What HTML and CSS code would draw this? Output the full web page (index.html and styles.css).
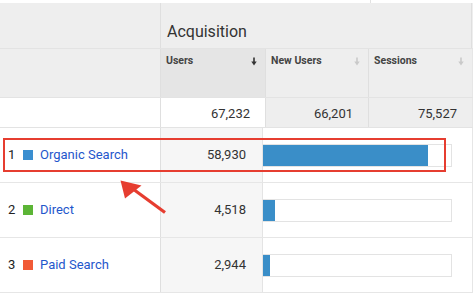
FILE: index.html
```html
<!DOCTYPE html>
<html>
<head>
<meta charset="utf-8">
<link rel="stylesheet" href="styles.css">
</head>
<body>
<div class="report">
  <div class="strip"><span class="tick"></span></div>
  <div class="grp">
    <div class="cell blank"></div>
    <div class="cell acq">Acquisition</div>
  </div>
  <div class="metrics">
    <div class="cell blank"></div>
    <div class="cell mh sorted"><span>Users</span>
      <svg class="sort" width="6" height="9" viewBox="0 0 6 9"><path d="M3 0.5V6" stroke="currentColor" stroke-width="1.6"/><path d="M0.3 4.6H5.7L3 8.4Z" fill="currentColor"/></svg>
    </div>
    <div class="cell mh"><span>New Users</span>
      <svg class="sort" width="6" height="9" viewBox="0 0 6 9"><path d="M3 0.5V6" stroke="currentColor" stroke-width="1.6"/><path d="M0.3 4.6H5.7L3 8.4Z" fill="currentColor"/></svg>
    </div>
    <div class="cell mh last"><span>Sessions</span>
      <svg class="sort" width="6" height="9" viewBox="0 0 6 9"><path d="M3 0.5V6" stroke="currentColor" stroke-width="1.6"/><path d="M0.3 4.6H5.7L3 8.4Z" fill="currentColor"/></svg>
    </div>
  </div>
  <div class="total">
    <div class="cell blank"></div>
    <div class="cell num white">67,232</div>
    <div class="cell num">66,201</div>
    <div class="cell num last">75,527</div>
  </div>
  <div class="row">
    <div class="cell label"><span class="rank">1</span><span class="sw blue"></span><a class="link">Organic Search</a></div>
    <div class="cell val">58,930</div>
    <div class="cell barcell"><div class="track"><div class="fill" style="width:165px"></div></div></div>
  </div>
  <div class="row">
    <div class="cell label"><span class="rank">2</span><span class="sw green"></span><a class="link">Direct</a></div>
    <div class="cell val">4,518</div>
    <div class="cell barcell"><div class="track"><div class="fill" style="width:12px"></div></div></div>
  </div>
  <div class="row">
    <div class="cell label"><span class="rank">3</span><span class="sw orange"></span><a class="link">Paid Search</a></div>
    <div class="cell val">2,944</div>
    <div class="cell barcell"><div class="track"><div class="fill" style="width:7px"></div></div></div>
  </div>

  <div class="highlight"></div>
  <svg class="pointer" width="473" height="294" viewBox="0 0 473 294">
    <line x1="165" y1="212.5" x2="131" y2="187.5" stroke="#e63d30" stroke-width="3.2"/>
    <polygon points="120.5,180.5 141.5,185.5 125,198.5" fill="#e63d30"/>
  </svg>
</div>
</body>
</html>
```

FILE: styles.css
```css
* { box-sizing: border-box; margin: 0; padding: 0; }
html, body { background: #fff; }
body {
  width: 473px;
  height: 294px;
  overflow: hidden;
  font-family: Roboto, "Liberation Sans", sans-serif;
  color: #333;
}
.report { position: relative; width: 473px; }

.strip { height: 3px; position: relative; }
.tick {
  position: absolute;
  left: 370px;
  top: 0;
  width: 1px;
  height: 3px;
  background: #e2e2e2;
}

.cell { border-right: 1px solid #dfdfdf; }
.cell.last { border-right: 1px solid #e6e6e6; }

.grp {
  display: grid;
  grid-template-columns: 161px 311px;
  height: 46px;
  background: #eeeeee;
  border-bottom: 1px solid #e3e3e3;
}
.acq {
  font-size: 16px;
  color: #333;
  padding: 20px 0 0 6px;
  line-height: 18px;
  letter-spacing: 0;
}

.metrics {
  display: grid;
  grid-template-columns: 161px 105px 103px 104px;
  height: 49px;
  background: #eeeeee;
  border-bottom: 1px solid #e3e3e3;
}
.mh {
  display: flex;
  justify-content: space-between;
  align-items: flex-start;
  padding: 5px 8px 0 5px;
  font-size: 10.5px;
  font-weight: bold;
  color: #444;
  line-height: 13px;
}
.mh .sort { margin-top: 3px; color: #c9c9c9; }
.mh.sorted { background: #e5e5e5; }
.mh.sorted .sort { color: #333; }

.total {
  display: grid;
  grid-template-columns: 161px 105px 103px 104px;
  height: 30px;
  background: #eeeeee;
  border-bottom: 1px solid #e3e3e3;
}
.total .blank { background: #fff; }
.num {
  display: flex;
  justify-content: flex-end;
  align-items: flex-end;
  padding: 0 15px 5px 0;
  font-size: 13px;
  line-height: 16px;
  color: #333;
}
.num.white { background: #fff; }

.row {
  display: grid;
  grid-template-columns: 161px 101px 211px;
  height: 55px;
  border-bottom: 1px solid #e6e6e6;
}
.label {
  display: flex;
  align-items: center;
  padding-left: 8px;
  font-size: 13px;
  padding-bottom: 1px;
}
.rank { color: #222; width: 15px; }
.sw { width: 10px; height: 10px; margin-right: 7px; margin-top: 1px; }
.sw.blue { background: #3a8ed0; }
.sw.green { background: #5cb536; }
.sw.orange { background: #f15a36; }
.link { color: #1f57cc; text-decoration: none; }

.val {
  display: flex;
  justify-content: flex-end;
  align-items: center;
  padding: 0 16px 1px 0;
  background: #f6f6f6;
  font-size: 13px;
  color: #333;
  border-right: none;
}
.barcell {
  display: flex;
  align-items: center;
  border-left: 1px solid #e4e4e4;
  border-right: 1px solid #e6e6e6;
}
.track {
  width: 189px;
  height: 23px;
  border: 1px solid #e3e3e3;
  border-left: none;
  background: #fff;
}
.fill { height: 21px; background: #3a8ec8; }

.highlight {
  position: absolute;
  left: 3px;
  top: 138px;
  width: 443px;
  height: 34px;
  border: 2px solid #e63d30;
}
.pointer { position: absolute; left: 0; top: 0; }
```
